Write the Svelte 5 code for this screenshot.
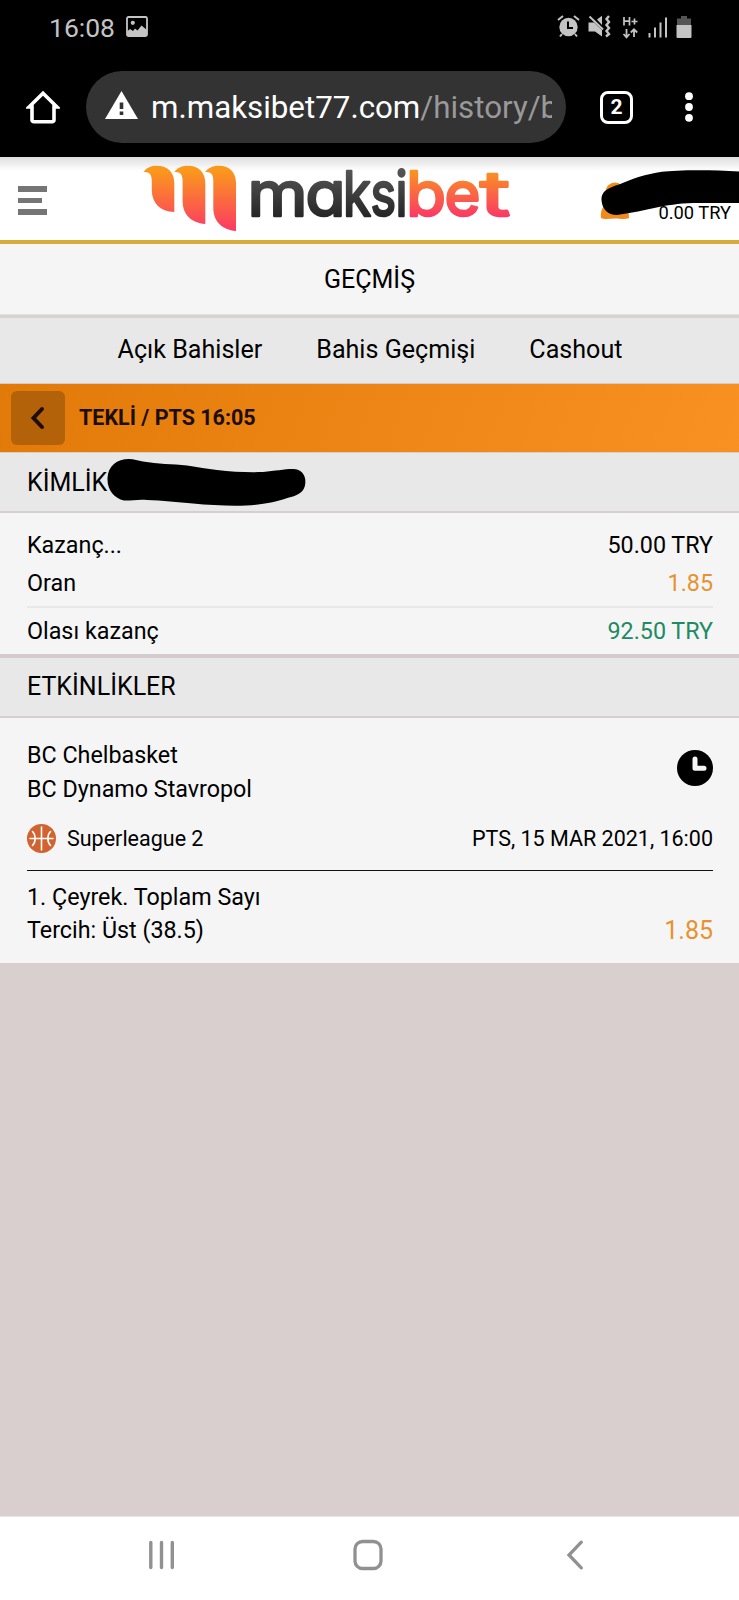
<script lang="ts">
  const tabs = ['Açık Bahisler', 'Bahis Geçmişi', 'Cashout'];

  const summary = [
    { label: 'Kazanç...', value: '50.00 TRY', tone: '' },
    { label: 'Oran', value: '1.85', tone: 'odds' }
  ];

  const event = {
    home: 'BC Chelbasket',
    away: 'BC Dynamo Stavropol',
    league: 'Superleague 2',
    date: 'PTS, 15 MAR 2021, 16:00',
    market: '1. Çeyrek. Toplam Sayı',
    pick: 'Tercih: Üst (38.5)',
    odds: '1.85'
  };

  // left edge and width of every letter of the wordmark
  const letters = [
    { char: 'm', x: 104.5, w: 60 },
    { char: 'a', x: 162.5, w: 40 },
    { char: 'k', x: 200, w: 28 },
    { char: 's', x: 227.5, w: 25.5 },
    { char: 'i', x: 252.5, w: 12 },
    { char: 'b', x: 263, w: 40 },
    { char: 'e', x: 301.5, w: 36 },
    { char: 't', x: 337, w: 30 }
  ];
</script>

<div class="screen">
  <div class="status-bar">
    <span class="time">16:08</span>
    <svg class="picture" width="22" height="21" viewBox="0 0 22 21">
      <rect x="1" y="1" width="20" height="19" rx="1.5" fill="none" stroke="#c4c4c4" stroke-width="1.8" />
      <circle cx="6.8" cy="6.8" r="2.1" fill="#c4c4c4" />
      <path d="M1 20V15.5L4 13L7 15L9 12.5L11.5 14.5L15.5 9.5L21 14V20Z" fill="#c4c4c4" />
    </svg>
    <div class="status-icons">
      <svg width="23" height="23" viewBox="0 0 23 23">
        <path d="M1 5L6 1M22 5L17 1M5 19L3 21.5M18 19L20 21.5" stroke="#c4c4c4" stroke-width="2" />
        <circle cx="11.5" cy="12" r="9.2" fill="#c4c4c4" />
        <path d="M11 6.5V13H16" fill="none" stroke="#000" stroke-width="2" />
      </svg>
      <svg class="mute" width="23" height="23" viewBox="0 0 23 23">
        <path d="M0.5 7.5H6L14 15V21.5L7 16.5H0.5Z" fill="#c4c4c4" />
        <path d="M9 4.5L14 0.8V10Z" fill="#c4c4c4" />
        <path d="M1.5 1.5L15 14.5" stroke="#c4c4c4" stroke-width="2" />
        <path d="M21 1L18.5 4L21 7L18.5 10L21 13L18.5 16L21 19L18 21.5" fill="none" stroke="#c4c4c4" stroke-width="2.4" />
      </svg>
      <svg class="network" width="17" height="24" viewBox="0 0 17 24">
        <path d="M2 2V10.5M7.5 2V10.5M2 6.2H7.5M9.5 6.5H15.5M12.5 3.5V9.5" stroke="#c4c4c4" stroke-width="1.7" />
        <path d="M4.5 14V22M1.5 19L4.5 22.3L7.5 19M12 22V14.5M8.8 17.5L12 14.3L15.2 17.5" fill="none" stroke="#c4c4c4" stroke-width="1.8" />
      </svg>
      <svg class="signal" width="20" height="22" viewBox="0 0 20 22">
        <path d="M1.5 21.5V17M7 21.5V11.5M12.5 21.5V6.5M18 21.5V1.5" stroke="#c4c4c4" stroke-width="2" />
      </svg>
      <svg class="battery" width="16" height="24" viewBox="0 0 16 24">
        <path d="M5 1H11V3.5H15V10H1V3.5H5Z" fill="#555" />
        <path d="M0.5 10H15.5V22A1 1 0 0 1 14.5 23H1.5A1 1 0 0 1 0.5 22Z" fill="#c4c4c4" />
      </svg>
    </div>
  </div>

  <div class="browser-bar">
    <svg class="home" width="34" height="34" viewBox="0 0 34 34">
      <path d="M6 17V30A1.8 1.8 0 0 0 7.8 31.8H26.2A1.8 1.8 0 0 0 28 30V17H31L17 3.2L3 17Z" fill="none" stroke="#fff" stroke-width="3.6" />
    </svg>
    <div class="address">
      <svg width="33" height="28" viewBox="0 0 33 28">
        <path d="M16.5 0L33 28H0Z" fill="#fff" />
        <path d="M16.5 11.5V18M16.5 20.5V24" stroke="#333" stroke-width="3.6" />
      </svg>
      <div class="url">m.maksibet77.com<span>/history/b</span></div>
    </div>
    <div class="tab-count">2</div>
    <svg class="more" width="10" height="32" viewBox="0 0 10 32">
      <circle cx="5" cy="5.2" r="3.9" fill="#fff" />
      <circle cx="5" cy="16" r="3.9" fill="#fff" />
      <circle cx="5" cy="26.8" r="3.9" fill="#fff" />
    </svg>
  </div>

  <header class="site-header">
    <div class="menu"><i></i><i class="short"></i><i></i></div>
    <svg class="logo" width="370" height="70" viewBox="0 0 370 70">
      <defs>
        <linearGradient id="flame" gradientUnits="userSpaceOnUse" x1="0" y1="3" x2="0" y2="69">
          <stop offset="0.08" stop-color="#fa971d" />
          <stop offset="1" stop-color="#fc3766" />
        </linearGradient>
        <linearGradient id="flame-text" gradientUnits="userSpaceOnUse" x1="0" y1="7" x2="0" y2="55">
          <stop offset="0" stop-color="#f9951f" />
          <stop offset="1" stop-color="#fb3668" />
        </linearGradient>
        <linearGradient id="ink" gradientUnits="userSpaceOnUse" x1="0" y1="7" x2="0" y2="55">
          <stop offset="0" stop-color="#555" />
          <stop offset="1" stop-color="#252525" />
        </linearGradient>
      </defs>
      <g fill="url(#flame)">
        <path d="M0.5 9C4 4.5 8 2.8 14 2.8C25 2.8 31.3 10 31.3 20V49C17 48.5 8.8 40 8.8 27V18C8.8 11 6 8.5 0.5 9Z" />
        <path d="M31.2 9C35 4.5 39 2.8 45 2.8C56 2.8 62.3 10 62.3 20V61C48 60 39.6 51 39.6 38V18C39.6 11 37 8.5 31.2 9Z" />
        <path d="M62 9C66 4.5 70 2.8 76 2.8C87 2.8 93 10 93 20V68C79 67 70.3 58 70.3 45V18C70.3 11 68 8.5 62 9Z" />
      </g>
      {#each letters as letter, i}
        <text
          class="letter"
          x={letter.x}
          y="52.5"
          textLength={letter.w}
          lengthAdjust="spacingAndGlyphs"
          fill={i < 5 ? 'url(#ink)' : 'url(#flame-text)'}
          stroke={i < 5 ? 'url(#ink)' : 'url(#flame-text)'}
        >{letter.char}</text>
      {/each}
    </svg>
    <div class="account">
      <svg width="30" height="38" viewBox="0 0 30 38">
        <circle cx="15" cy="10" r="9.5" fill="#f08a1c" />
        <path d="M1 36C0 27 4 20 15 20C26 20 29 27 29 36C24 38 20 36.5 15 36.5S5 38 1 36Z" fill="#f08a1c" />
      </svg>
      <span>0.00 TRY</span>
    </div>
    <svg class="scribble top" width="140" height="50" viewBox="600 168 140 50">
      <path d="M601.5 200C601 192 607 188 619 184.5C632 179 646 174 662 171.8C675 170 710 169.5 740 171.5V203H700C682 203 672 204.5 659 207C644 210 632 213 617 215C608 215 602 209 601.5 200Z" />
    </svg>
  </header>

  <div class="page-title">GEÇMİŞ</div>

  <nav class="tabs">
    {#each tabs as tab}
      <span>{tab}</span>
    {/each}
  </nav>

  <div class="bet-bar">
    <button aria-label="Geri">
      <svg width="16" height="24" viewBox="0 0 16 24">
        <path d="M12 3L3.5 12L12 21" fill="none" stroke="#1c0d00" stroke-width="4" stroke-linecap="round" />
      </svg>
    </button>
    <span>TEKLİ / PTS 16:05</span>
  </div>

  <div class="section-head id-row">
    KİMLİK
    <svg class="scribble id" width="200" height="50" viewBox="107 458 200 50">
      <path d="M107.5 478C108 466 117 459 129 459C134 459 138 460.5 143 461.5C158 464 172 464 187 465.5C198 467 207 469 217 470C233 472 250 472.5 263 472C275 471 284 469 293 469C302 469 306 476 305.3 483C305 491 299 495 291 497C281 500 273 503 258 504.5C240 507 215 505.5 193 503.5C178 502 162 500.5 147 500C138 499 130 501 124 500.5C114 498 107 490 107.5 478Z" />
    </svg>
  </div>

  <div class="summary">
    {#each summary as row}
      <div class="row"><span>{row.label}</span><span class={row.tone}>{row.value}</span></div>
    {/each}
    <div class="row total"><span>Olası kazanç</span><span class="win">92.50 TRY</span></div>
  </div>

  <div class="section-head events">ETKİNLİKLER</div>

  <div class="event">
    <div class="teams">
      <div>
        <p>{event.home}</p>
        <p>{event.away}</p>
      </div>
      <svg width="36" height="36" viewBox="0 0 36 36">
        <circle cx="18" cy="18" r="18" fill="#000" />
        <path d="M18 9V18.3H27" fill="none" stroke="#f5f5f5" stroke-width="5" stroke-linecap="round" stroke-linejoin="round" />
      </svg>
    </div>
    <div class="league">
      <svg width="29" height="29" viewBox="0 0 29 29">
        <circle cx="14.5" cy="14.5" r="14.5" fill="#d2622f" />
        <path d="M14.5 3V26M3 14.5H26M5.5 7.5C9 11 9 18 5.5 21.5M23.5 7.5C20 11 20 18 23.5 21.5" fill="none" stroke="#fff" stroke-width="1.6" stroke-linecap="round" />
      </svg>
      <span>{event.league}</span>
      <time>{event.date}</time>
    </div>
    <div class="market">
      <p>{event.market}</p>
      <p>{event.pick}<span class="odds">{event.odds}</span></p>
    </div>
  </div>

  <div class="system-nav">
    <svg width="28" height="32" viewBox="0 0 28 32">
      <path d="M3.8 3.5V28.5M14.5 3.5V28.5M25.3 3.5V28.5" stroke="#919191" stroke-width="3.4" stroke-linecap="round" />
    </svg>
    <svg class="home-key" width="32" height="32" viewBox="0 0 32 32">
      <rect x="3" y="2.5" width="26" height="27" rx="7.5" fill="none" stroke="#919191" stroke-width="3.3" />
    </svg>
    <svg width="20" height="32" viewBox="0 0 20 32">
      <path d="M16.3 3.2L4 16L16.3 28.8" fill="none" stroke="#919191" stroke-width="3.3" stroke-linecap="round" />
    </svg>
  </div>
</div>

<style>
  :global(body) {
    margin: 0;
  }

  .screen {
    display: flex;
    flex-direction: column;
    width: 739px;
    height: 1600px;
    overflow: hidden;
    background: #d9cfce;
    color: #000;
    font-family: Roboto, "Liberation Sans", sans-serif;
    font-size: 23.3px;
  }

  .screen > div,
  .screen > header,
  .screen > nav {
    box-sizing: border-box;
    flex: none;
  }

  p {
    margin: 0;
  }

  .status-bar {
    display: flex;
    align-items: center;
    height: 55px;
    padding: 0 47px 0 49px;
    background: #000;
    color: #c4c4c4;
  }

  .time {
    width: 77px;
    font-size: 26.5px;
  }

  .picture {
    margin-bottom: 2px;
  }

  .status-icons {
    display: flex;
    align-items: center;
    margin-left: auto;
    padding-bottom: 2px;
  }

  .mute {
    margin-left: 8px;
  }

  .network {
    margin-left: 11px;
  }

  .signal {
    margin-left: 9px;
  }

  .battery {
    margin-left: 8px;
  }

  .browser-bar {
    display: flex;
    align-items: center;
    height: 102px;
    padding: 2px 45px 0 26px;
    background: #000;
  }

  .address {
    display: flex;
    align-items: center;
    box-sizing: border-box;
    width: 480px;
    height: 72px;
    margin-left: 26px;
    padding: 0 14px 0 19px;
    border-radius: 36px;
    background: #333;
  }

  .address svg {
    flex: none;
    margin-bottom: 4px;
  }

  .url {
    margin-left: 13px;
    padding-top: 1px;
    overflow: hidden;
    color: #fff;
    font-size: 31.3px;
    white-space: nowrap;
  }

  .url span {
    color: #999;
  }

  .tab-count {
    display: flex;
    align-items: center;
    justify-content: center;
    box-sizing: border-box;
    width: 33px;
    height: 33px;
    margin-left: 34px;
    border: 3.5px solid #fff;
    border-radius: 8px;
    color: #fff;
    font-size: 21px;
    font-weight: 700;
  }

  .more {
    margin-left: auto;
  }

  .site-header {
    position: relative;
    display: flex;
    height: 87px;
    padding-left: 18px;
    border-bottom: 4px solid #d8a93b;
    background: linear-gradient(#dedede, #fff 14px);
  }

  .menu {
    display: flex;
    flex-direction: column;
    gap: 6px;
    width: 29px;
    padding-top: 29px;
  }

  .menu i {
    height: 5.5px;
    background: #757575;
  }

  .menu .short {
    width: 24px;
  }

  .logo {
    flex: none;
    margin: 6px 0 0 96px;
    overflow: visible;
  }

  .letter {
    font-family: Inter, Roboto, sans-serif;
    font-size: 62px;
    font-weight: 400;
    font-feature-settings: "cv11";
    stroke-width: 2.6px;
    stroke-linejoin: round;
  }

  .account {
    display: flex;
    flex: 1;
    justify-content: space-between;
    padding: 25px 8px 0 87px;
    font-size: 18.3px;
  }

  .account span {
    padding-top: 20px;
    line-height: 21px;
  }

  .scribble {
    position: absolute;
  }

  .scribble.top {
    top: 11px;
    right: -1px;
  }

  .page-title {
    height: 71px;
    border-bottom: 1px solid #e4e2e1;
    background: #f5f5f5;
    font-size: 25px;
    line-height: 72px;
    text-align: center;
  }

  .tabs {
    display: flex;
    justify-content: center;
    gap: 54px;
    height: 69px;
    padding-left: 1px;
    border-top: 3px solid #d6d3d1;
    border-bottom: 1px solid #d3cccc;
    background: #e8e8e8;
    font-size: 25.1px;
    line-height: 64px;
  }

  .bet-bar {
    display: flex;
    align-items: center;
    height: 68px;
    padding: 0 0 1px 11px;
    background: linear-gradient(110deg, #e17a09, #f99122);
    color: #1c0d00;
    font-size: 21.5px;
    font-weight: 700;
  }

  .bet-bar button {
    display: flex;
    align-items: center;
    justify-content: center;
    width: 54px;
    height: 54px;
    margin-right: 14px;
    padding: 0;
    border: none;
    border-radius: 6px;
    background: #b4620a;
  }

  .section-head {
    position: relative;
    padding-left: 27px;
    border-bottom: 2px solid #d6cfcf;
    background: #e8e8e8;
    font-size: 25px;
  }

  .id-row {
    height: 61px;
    border-top: 1px solid #d9cfc5;
    line-height: 59px;
  }

  .scribble.id {
    top: 5px;
    left: 107px;
  }

  .summary {
    height: 141px;
    padding: 14px 26px 0 27px;
    background: #f5f5f5;
  }

  .row {
    display: flex;
    justify-content: space-between;
    line-height: 37.5px;
  }

  .total {
    margin-top: 4px;
    border-top: 2px solid #e8e8e8;
    line-height: 46px;
  }

  .odds {
    color: #e8922f;
  }

  .win {
    color: #218a62;
  }

  .events {
    height: 64px;
    border-top: 4px solid #d3cccc;
    line-height: 57px;
  }

  .event {
    height: 245px;
    padding: 20px 26px 0 27px;
    background: #f5f5f5;
  }

  .teams {
    display: flex;
    justify-content: space-between;
    line-height: 34px;
  }

  .teams svg {
    margin-top: 12px;
  }

  .league {
    display: flex;
    align-items: center;
    height: 64px;
    border-bottom: 1.5px solid #111;
    font-size: 21.5px;
  }

  .league span {
    margin-left: 11px;
  }

  .league time {
    margin-left: auto;
  }

  .market {
    padding-top: 10px;
    line-height: 33px;
  }

  .market p {
    display: flex;
    justify-content: space-between;
  }

  .market .odds {
    font-size: 25px;
  }

  .system-nav {
    display: flex;
    justify-content: space-between;
    align-items: center;
    height: 84px;
    margin-top: auto;
    padding: 0 154px 8px 147px;
    border-top: 1px solid #ebe6e6;
    background: #fff;
  }

  .home-key {
    margin-right: 4px;
  }
</style>
